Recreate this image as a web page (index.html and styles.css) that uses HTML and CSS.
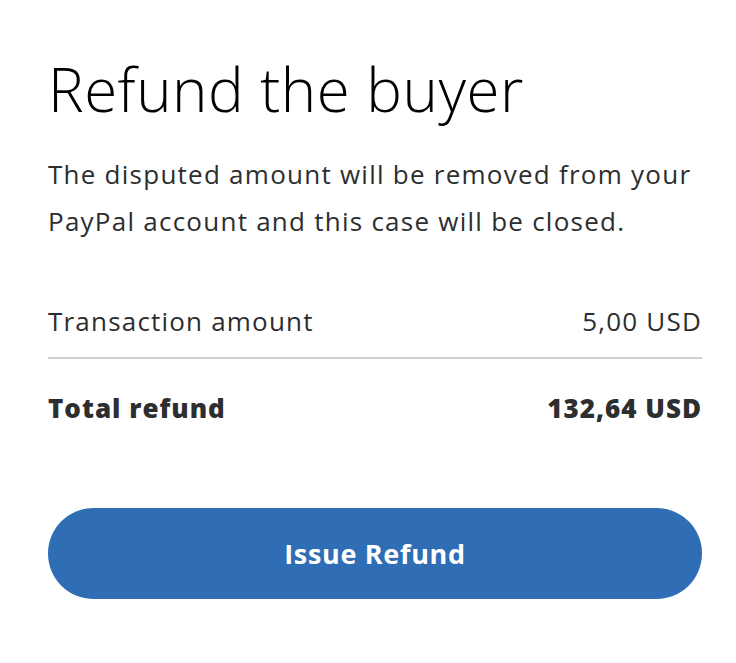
FILE: index.html
```html
<!DOCTYPE html>
<html>
<head>
<meta charset="utf-8">
<link rel="stylesheet" href="styles.css">
</head>
<body>
<main class="panel">
  <h1 class="title">Refund the buyer</h1>
  <p class="desc">The disputed amount will be removed from your PayPal account and this case will be closed.</p>
  <div class="row row-first">
    <span>Transaction amount</span>
    <span>5,00 USD</span>
  </div>
  <div class="row row-total">
    <span>Total refund</span>
    <span>132,64 USD</span>
  </div>
  <button class="btn">Issue Refund</button>
</main>
</body>
</html>
```
FILE: styles.css
```css
html, body {
  margin: 0;
  padding: 0;
  background: #ffffff;
}
body {
  font-family: "Open Sans", "Noto Sans", sans-serif;
  color: #2c2e2f;
}
.panel {
  width: 654px;
  padding: 49px 0 0 48px;
  display: flex;
  flex-direction: column;
}
.title {
  margin: 0;
  font-size: 60px;
  font-weight: 300;
  line-height: 80px;
  letter-spacing: 0.5px;
  color: #000000;
}
.desc {
  margin: 22px 0 0;
  font-size: 26px;
  line-height: 47px;
  letter-spacing: 1.25px;
}
.row {
  display: flex;
  justify-content: space-between;
  align-items: center;
  font-size: 26px;
  line-height: 36px;
  letter-spacing: 1.2px;
}
.row-first {
  margin-top: 58px;
  padding-bottom: 18px;
  border-bottom: 2px solid #cbd3d8;
}
.row-total {
  margin-top: 31px;
  font-weight: 800;
  letter-spacing: 1px;
}
.btn {
  margin-top: 82px;
  height: 91px;
  border: none;
  border-radius: 46px;
  background: #2f6db5;
  color: #ffffff;
  font-family: inherit;
  font-size: 27px;
  font-weight: 700;
  letter-spacing: 0.7px;
  cursor: pointer;
}
```
